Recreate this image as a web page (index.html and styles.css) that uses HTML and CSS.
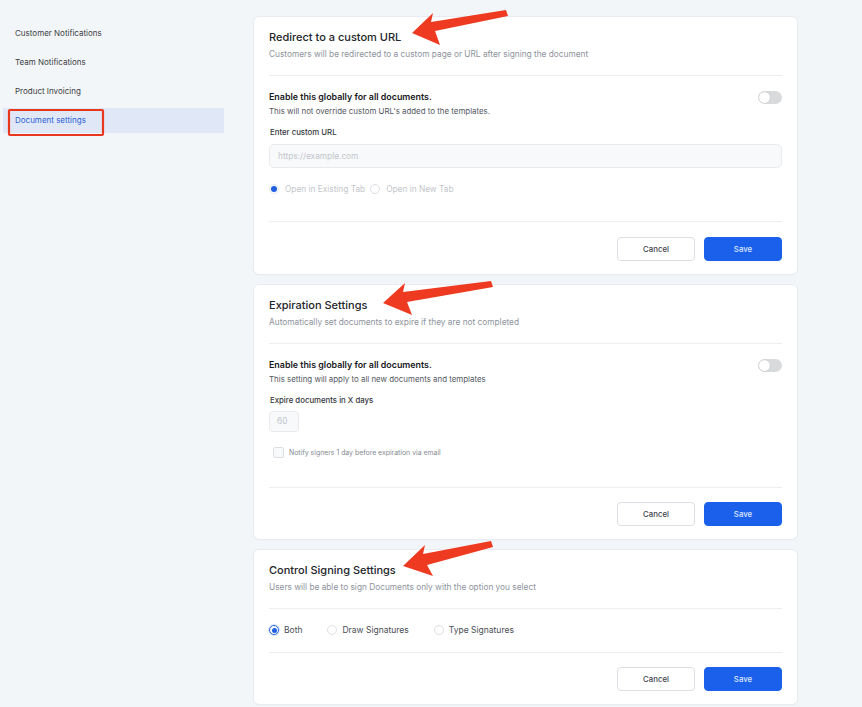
FILE: index.html
```html
<!DOCTYPE html>
<html lang="en">
<head>
<meta charset="utf-8">
<title>Document settings</title>
<link rel="stylesheet" href="styles.css">
</head>
<body>
<div class="page">
  <nav class="sidebar">
    <div class="nav-item">Customer Notifications</div>
    <div class="nav-item">Team Notifications</div>
    <div class="nav-item">Product Invoicing</div>
    <div class="nav-item active">Document settings</div>
  </nav>

  <main class="main">
    <section class="card">
      <header class="card-head">
        <h2 class="card-title">Redirect to a custom URL</h2>
        <p class="card-sub">Customers will be redirected to a custom page or URL after signing the document</p>
      </header>
      <div class="card-body body-redirect">
        <div class="toggle-row">
          <div>
            <div class="row-title">Enable this globally for all documents.</div>
            <div class="row-desc">This will not override custom URL's added to the templates.</div>
          </div>
          <span class="toggle"><span class="knob"></span></span>
        </div>
        <div class="field-label">Enter custom URL</div>
        <div class="input url-input">https://example.com</div>
        <div class="radio-row disabled">
          <span class="radio checked faded"></span><span class="radio-label">Open in Existing Tab</span>
          <span class="radio"></span><span class="radio-label">Open in New Tab</span>
        </div>
      </div>
      <footer class="card-foot">
        <button class="btn btn-cancel">Cancel</button>
        <button class="btn btn-save">Save</button>
      </footer>
    </section>

    <section class="card">
      <header class="card-head">
        <h2 class="card-title">Expiration Settings</h2>
        <p class="card-sub">Automatically set documents to expire if they are not completed</p>
      </header>
      <div class="card-body body-expire">
        <div class="toggle-row">
          <div>
            <div class="row-title">Enable this globally for all documents.</div>
            <div class="row-desc">This setting will apply to all new documents and templates</div>
          </div>
          <span class="toggle"><span class="knob"></span></span>
        </div>
        <div class="field-label">Expire documents in X days</div>
        <div class="input days-input">60</div>
        <div class="check-row">
          <span class="checkbox"></span><span class="check-label">Notify signers 1 day before expiration via email</span>
        </div>
      </div>
      <footer class="card-foot foot-tight">
        <button class="btn btn-cancel">Cancel</button>
        <button class="btn btn-save">Save</button>
      </footer>
    </section>

    <section class="card">
      <header class="card-head">
        <h2 class="card-title">Control Signing Settings</h2>
        <p class="card-sub">Users will be able to sign Documents only with the option you select</p>
      </header>
      <div class="card-body body-sign">
        <div class="radio-row sign-options">
          <span class="option"><span class="radio checked"></span><span class="radio-label">Both</span></span>
          <span class="option"><span class="radio"></span><span class="radio-label">Draw Signatures</span></span>
          <span class="option"><span class="radio"></span><span class="radio-label">Type Signatures</span></span>
        </div>
      </div>
      <footer class="card-foot foot-tight">
        <button class="btn btn-cancel">Cancel</button>
        <button class="btn btn-save">Save</button>
      </footer>
    </section>
  </main>
</div>

<svg class="annotations" width="862" height="707" viewBox="0 0 862 707" aria-hidden="true">
  <rect x="9" y="110" width="94" height="25" fill="none" stroke="#e8361f" stroke-width="2.2" rx="1"/>
  <polygon fill="#ef3a22" points="412,33 433,13 431,22 506,10 508,16 435,31 440,45"/>
  <polygon fill="#ef3a22" points="383,303 405,283 403,292 491,281 493,287 407,302 412,315"/>
  <polygon fill="#ef3a22" points="403,566 425,545 423,554 491,541 493,547 427,565 433,576"/>
</svg>
</body>
</html>
```

FILE: styles.css
```css
* { box-sizing: border-box; }

html, body {
  margin: 0;
  padding: 0;
}

body {
  background: #f3f6f9;
  font-family: Inter, "Noto Sans", "Liberation Sans", sans-serif;
  color: #222;
  width: 862px;
  height: 707px;
  overflow: hidden;
  position: relative;
}

.page {
  display: flex;
  align-items: flex-start;
}

.sidebar {
  width: 221px;
  margin-left: 3px;
  padding-top: 21px;
  display: flex;
  flex-direction: column;
  gap: 4px;
}

.nav-item {
  height: 25px;
  line-height: 25px;
  padding-left: 12px;
  font-size: 8px;
  color: #3a3d42;
}

.nav-item.active {
  background: #e0e8f8;
  color: #2b5fd4;
}

.main {
  margin-left: 30px;
  padding-top: 17px;
  width: 543px;
  display: flex;
  flex-direction: column;
  gap: 11px;
}

.card {
  background: #fff;
  border-radius: 5px;
  box-shadow: 0 0 0 1px #e8ebef, 0 1px 2px rgba(20, 30, 50, 0.05);
  padding: 0 15px;
}

.card-head {
  padding-top: 13px;
  padding-bottom: 15px;
  border-bottom: 1px solid #eceef1;
}

.card-title {
  margin: 0;
  font-size: 11px;
  line-height: 14px;
  font-weight: 500;
  color: #22252a;
}

.card-sub {
  margin: 4px 0 0;
  font-size: 8.3px;
  line-height: 12px;
  color: #8e939c;
}

.card-body {
  border-bottom: 1px solid #eceef1;
}

.body-redirect { padding-top: 15px; padding-bottom: 26px; }
.body-expire { padding-top: 15px; padding-bottom: 29px; }
.body-sign { padding-top: 15px; padding-bottom: 16px; }

.toggle-row {
  display: flex;
  justify-content: space-between;
  align-items: flex-start;
}

.row-title {
  font-size: 8.9px;
  line-height: 12px;
  font-weight: 600;
  color: #17191c;
}

.row-desc {
  margin-top: 2px;
  font-size: 7.9px;
  line-height: 12px;
  color: #54585f;
}

.toggle {
  width: 24px;
  height: 13px;
  border-radius: 7px;
  background: #d9dadc;
  position: relative;
  flex: none;
}

.knob {
  position: absolute;
  left: 1px;
  top: 1px;
  width: 11px;
  height: 11px;
  border-radius: 50%;
  background: #fff;
  box-shadow: 0 0 1px rgba(0,0,0,0.25);
}

.field-label {
  margin-top: 9px;
  padding-left: 1px;
  font-size: 7.8px;
  line-height: 12px;
  font-weight: 500;
  color: #33363b;
}

.input {
  background: #f8f9fb;
  border: 1px solid #e9ebee;
  border-radius: 5px;
  color: #c3c6cb;
  font-size: 8.3px;
}

.url-input {
  margin-top: 6px;
  height: 24px;
  line-height: 22px;
  padding-left: 8px;
}

.days-input {
  margin-top: 5px;
  width: 30px;
  height: 21px;
  line-height: 19px;
  padding-left: 7px;
  border-radius: 4px;
}

.radio-row {
  display: flex;
  align-items: center;
  height: 12px;
}

.disabled {
  margin-top: 15px;
}

.radio {
  width: 10px;
  height: 10px;
  border-radius: 50%;
  border: 1px solid #dcdfe4;
  background: #fff;
  flex: none;
  position: relative;
}

.radio.checked {
  border-color: #2b67df;
  box-shadow: 0 0 0 1px #d9e3f8;
}

.radio.checked::after {
  content: "";
  position: absolute;
  left: 1.5px;
  top: 1.5px;
  width: 5px;
  height: 5px;
  border-radius: 50%;
  background: #1f5fe0;
}

.radio.faded {
  border-color: #e4e8f0;
  box-shadow: none;
}

.radio.faded::after {
  left: 1px;
  top: 1px;
  width: 6px;
  height: 6px;
}

.radio-label {
  margin-left: 6px;
  margin-right: 5px;
  font-size: 8.3px;
  line-height: 12px;
  color: #c3c6cb;
}

.sign-options {
  gap: 25px;
}

.option {
  display: flex;
  align-items: center;
}

.sign-options .radio-label {
  margin-left: 5px;
  margin-right: 0;
  color: #4a4e55;
  font-size: 8.5px;
}

.check-row {
  display: flex;
  align-items: center;
  margin-top: 14px;
  height: 12px;
  padding-left: 4px;
}

.checkbox {
  width: 11px;
  height: 11px;
  border: 1px solid #dcdfe3;
  border-radius: 2px;
  background: #f8f9fa;
  flex: none;
}

.check-label {
  margin-left: 5px;
  font-size: 6.9px;
  color: #868a91;
}

.card-foot {
  display: flex;
  justify-content: flex-end;
  gap: 9px;
  padding-top: 15px;
  padding-bottom: 13px;
}

.foot-tight {
  padding-top: 14px;
}

.btn {
  width: 78px;
  height: 24px;
  border-radius: 4px;
  font-family: inherit;
  font-size: 7.8px;
  font-weight: 500;
  padding: 0;
  cursor: pointer;
}

.btn-cancel {
  background: #fff;
  border: 1px solid #dcdfe3;
  color: #40444b;
}

.btn-save {
  background: #1a60ea;
  border: 1px solid #1a60ea;
  color: #dfe8fb;
}

.annotations {
  position: absolute;
  left: 0;
  top: 0;
  pointer-events: none;
}
```
